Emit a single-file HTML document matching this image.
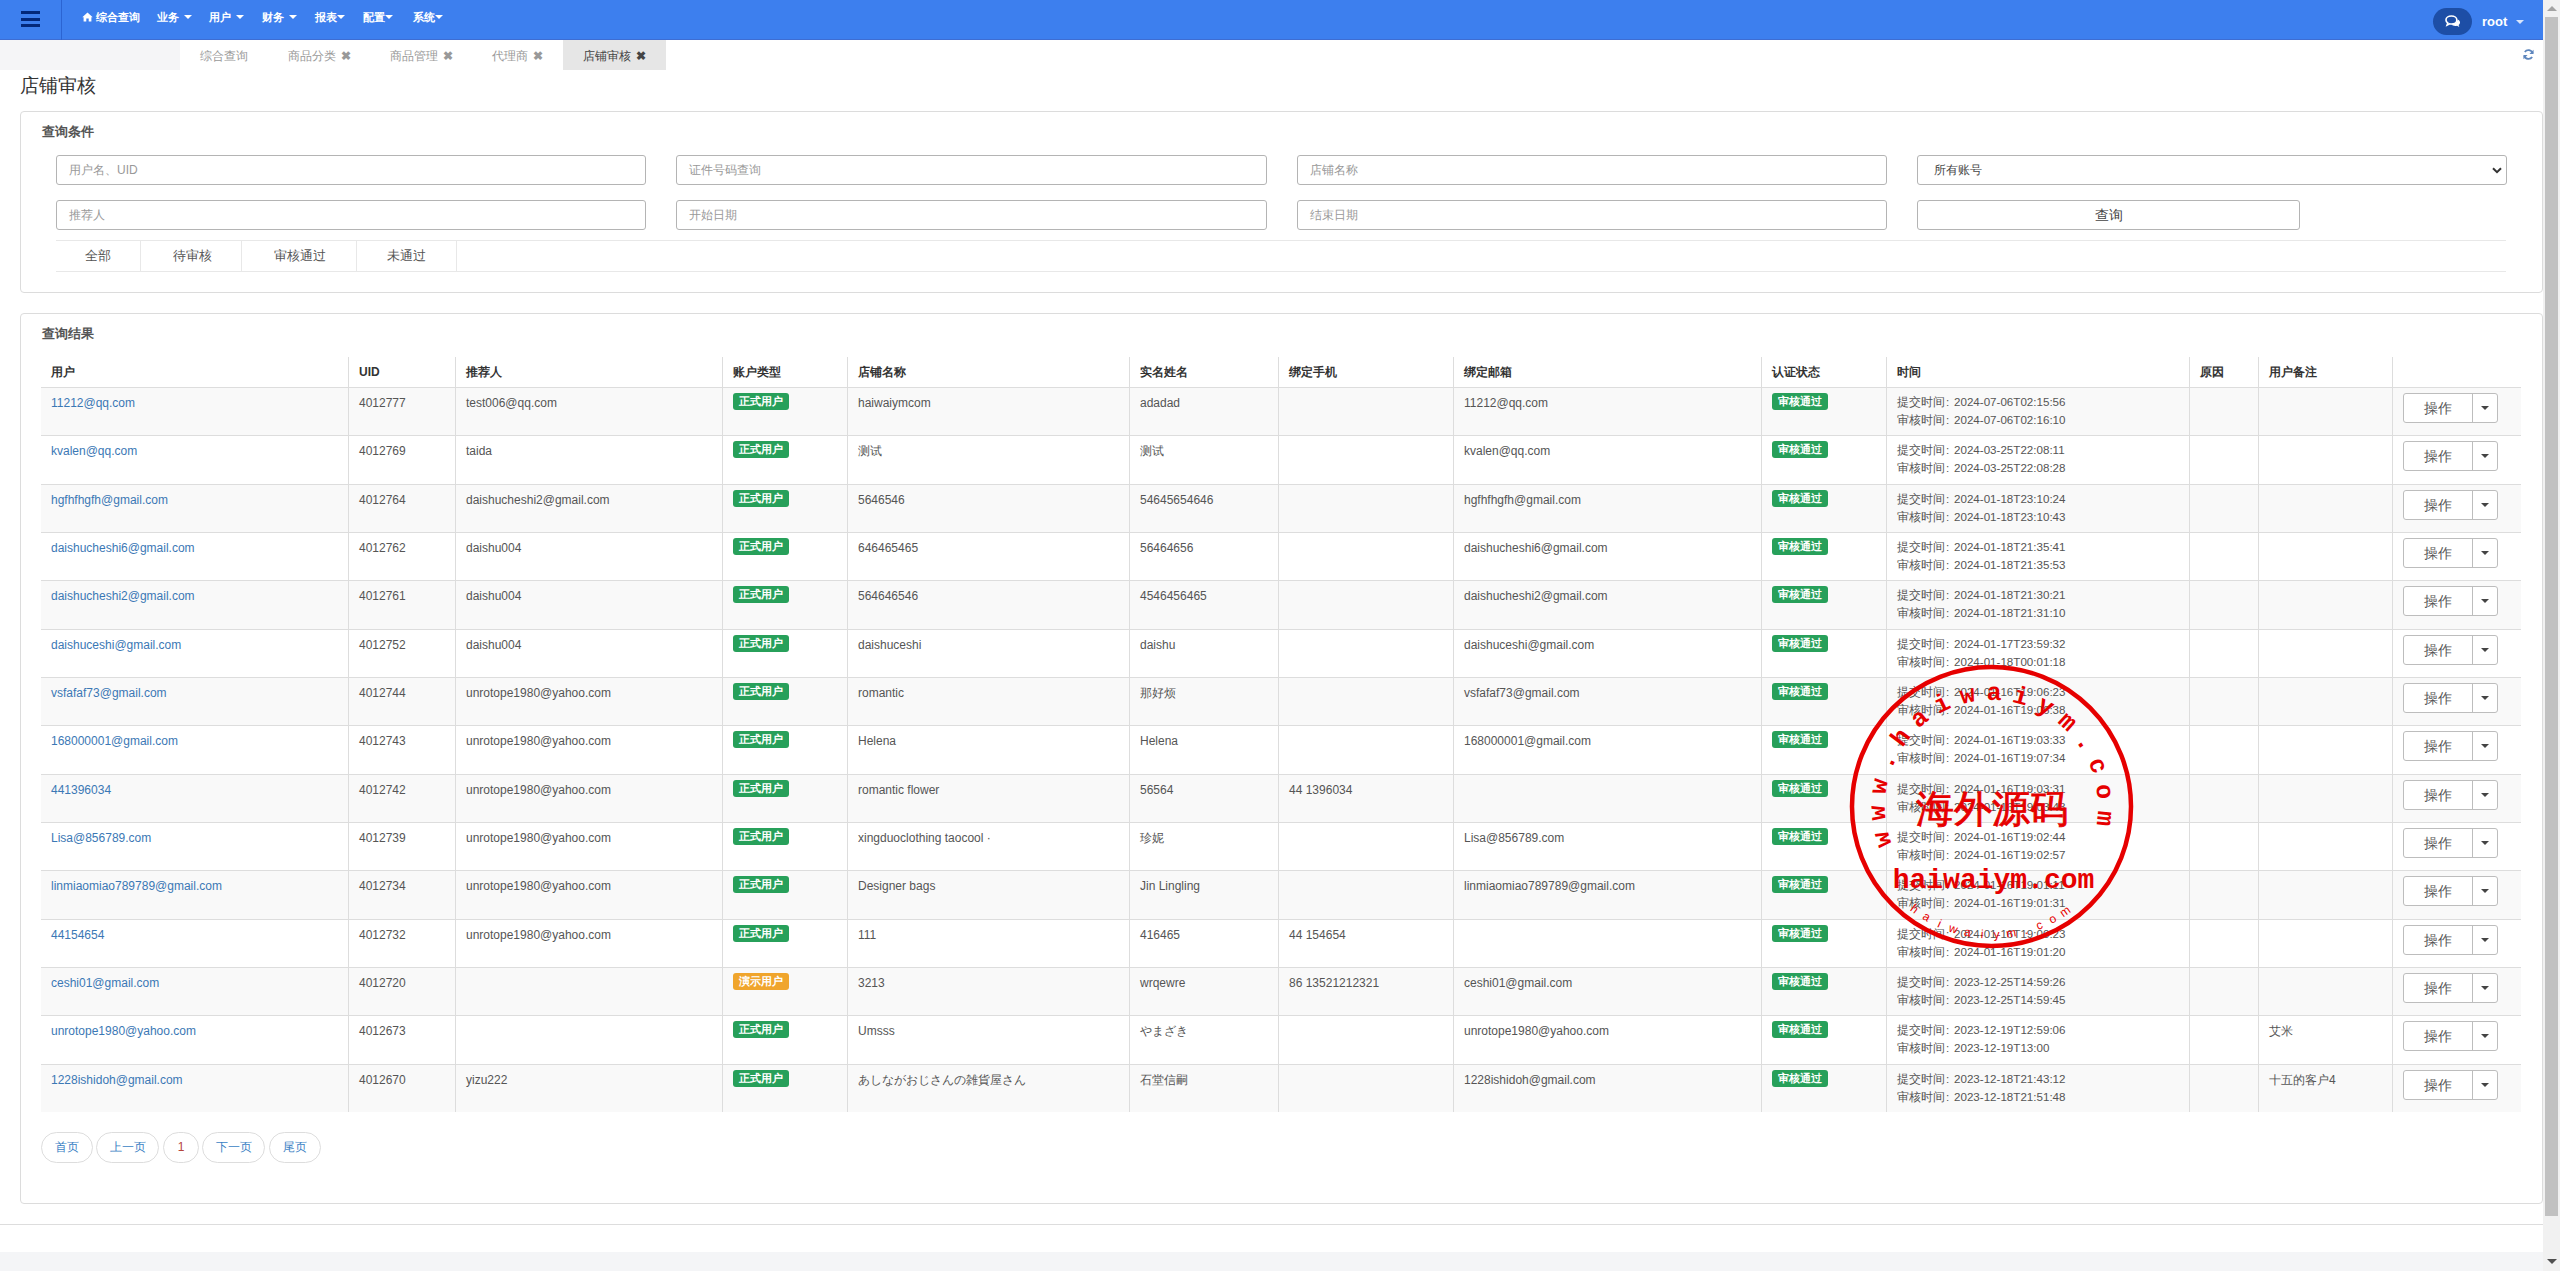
<!DOCTYPE html>
<html><head><meta charset="utf-8"><title>店铺审核</title>
<style>
*{margin:0;padding:0;box-sizing:border-box}
html,body{width:2560px;height:1271px;overflow:hidden;background:#fff}
body{position:relative;font-family:"Liberation Sans",sans-serif;font-size:12px;color:#555}
.abs{position:absolute}
#nav{position:absolute;left:0;top:0;width:2543px;height:40px;background:#3d7fee;border-bottom:1px solid #3e6dd2}
#nav .sep{position:absolute;left:61px;top:0;width:1px;height:40px;background:#2b64d2}
#nav .hb{position:absolute;left:21px;width:19px;height:3px;background:#03287a}
#nav .it{position:absolute;top:10px;color:#fff;font-weight:bold;font-size:11px;line-height:14px;white-space:nowrap}
.caret{display:inline-block;width:0;height:0;border-left:4px solid transparent;border-right:4px solid transparent;border-top:4px solid #fff;vertical-align:middle;margin-top:-2px}
#chat{position:absolute;left:2433px;top:8px;width:39px;height:27px;border-radius:14px;background:#1d4ea6}
#root{position:absolute;left:2482px;top:14px;color:#fff;font-weight:bold;font-size:13px;line-height:15px}
#tabs{position:absolute;left:0;top:40px;width:2543px;height:30px}
#tabs .gray{position:absolute;left:0;top:0;width:180px;height:30px;background:#f5f5f7}
#tabs .tab{position:absolute;top:0;height:30px;line-height:32px;color:#999;font-size:12px;white-space:nowrap}
#tabs .act{background:#e6e6e6;color:#444}
.x{display:inline-block;font-weight:bold;color:#999;margin-left:5px;font-size:12px}
.act .x{color:#444}
#title{position:absolute;left:20px;top:74px;font-size:19px;line-height:24px;color:#333}
.panel{position:absolute;left:20px;width:2523px;border:1px solid #dcdcdc;border-radius:4px;background:#fff}
.ph{position:absolute;left:42px;font-size:13px;font-weight:bold;color:#555;line-height:16px}
.inp{position:absolute;height:30px;border:1px solid #b4b4b4;border-radius:3px;background:#fff;color:#999;font-size:12px;line-height:28px;padding-left:12px;white-space:nowrap}
.sel{color:#444;padding-left:16px}
.btn{position:absolute;height:30px;border:1px solid #b4b4b4;border-radius:3px;background:#fff;color:#444;font-size:14px;line-height:28px;text-align:center}
.ft{position:absolute;top:241px;height:30px;line-height:30px;font-size:13px;color:#555;text-align:center}
#ftl1,#ftl2{position:absolute;left:56px;width:2450px;height:1px;background:#e8e8e8}
.fsep{position:absolute;top:241px;width:1px;height:30px;background:#e8e8e8}
#tbl{position:absolute;left:0;top:0}
.rbg{position:absolute;left:41px;width:2480px}
.hl{position:absolute;left:41px;width:2480px;height:1px;background:#ddd}
.vl{position:absolute;top:357px;width:1px;height:755px;background:#ddd}
.th{position:absolute;top:364px;font-weight:bold;color:#333;font-size:12px;line-height:16px;white-space:nowrap}
.td{position:absolute;font-size:12px;line-height:18px;color:#555;white-space:nowrap}
.lk{color:#3b78b5}
.tm{line-height:18px;font-size:11.6px}
.bd{position:absolute;height:17px;line-height:17px;padding:0 6px;border-radius:3px;background:#27a05a;color:#fff;font-weight:bold;font-size:11px;white-space:nowrap}
.bd.or{background:#f0a52c}
.op{position:absolute;width:95px;height:30px;border:1px solid #bdbdbd;border-radius:3px;background:#fff}
.opm{position:absolute;left:0;top:0;width:69px;height:28px;line-height:28px;text-align:center;font-size:14px;color:#555;border-right:1px solid #bdbdbd}
.opc{position:absolute;left:69px;top:0;width:24px;height:27px}
.opc i{position:absolute;left:8px;top:12px;border-left:4px solid transparent;border-right:4px solid transparent;border-top:4px solid #444}
.pg{position:absolute;top:1132px;height:31px;border:1px solid #ddd;border-radius:16px;color:#3a7fc4;font-size:12px;line-height:29px;text-align:center;background:#fff}
#foot{position:absolute;left:0;top:1224px;width:2543px;height:1px;background:#ddd}
#gray{position:absolute;left:0;top:1252px;width:2543px;height:19px;background:#f4f5f7}
#sb{position:absolute;left:2543px;top:0;width:17px;height:1271px;background:#f1f1f1}
#thumb{position:absolute;left:2545px;top:17px;width:13px;height:1199px;background:#c1c1c1}
.sba{position:absolute;left:2547px;width:0;height:0;border-left:5px solid transparent;border-right:5px solid transparent}

.cl{display:inline-block;width:9px;font-style:normal;padding-left:1px}

</style></head><body>
<div id="nav">
 <div class="hb" style="top:11px"></div><div class="hb" style="top:17.5px"></div><div class="hb" style="top:24px"></div>
 <div class="sep"></div>
 <div class="it" style="left:82px"><svg width="11" height="10" viewBox="0 0 11 10" style="vertical-align:-1px;margin-right:3px"><path d="M5.5 0.5 L0.3 5.2 L1.6 5.2 L1.6 9.5 L4.3 9.5 L4.3 6.6 L6.7 6.6 L6.7 9.5 L9.4 9.5 L9.4 5.2 L10.7 5.2 Z" fill="#fff"/></svg>综合查询</div>
 <div class="it" style="left:157px">业务 <span class="caret" style="margin-left:2px"></span></div>
 <div class="it" style="left:209px">用户 <span class="caret" style="margin-left:2px"></span></div>
 <div class="it" style="left:262px">财务 <span class="caret" style="margin-left:2px"></span></div>
 <div class="it" style="left:315px">报表<span class="caret"></span></div>
 <div class="it" style="left:363px">配置<span class="caret"></span></div>
 <div class="it" style="left:413px">系统<span class="caret"></span></div>
 <div id="chat"><svg width="16" height="13" viewBox="0 0 20 16" style="position:absolute;left:11.5px;top:7px"><path d="M8 1.2c-3.8 0-6.8 2.2-6.8 5 0 1.5.9 2.8 2.3 3.7L2.6 12.4l3.2-1.6c.7.2 1.5.3 2.2.3 3.8 0 6.8-2.2 6.8-5S11.8 1.2 8 1.2z" fill="none" stroke="#fff" stroke-width="2"/><path d="M15.8 5.5c1.8.8 3 2.2 3 3.8 0 1.2-.7 2.3-1.8 3.1l.9 2.4-2.9-1.5c-.6.2-1.3.2-2 .2-2.2 0-4.1-.8-5.2-2 3.9-.1 7.6-2.3 8-6z" fill="#fff"/></svg></div>
 <div id="root">root <span class="caret" style="margin-left:5px;opacity:.8"></span></div>
</div>
<div id="tabs">
 <div class="gray"></div>
 <div class="tab" style="left:200px">综合查询</div>
 <div class="tab" style="left:288px">商品分类<span class="x">✖</span></div>
 <div class="tab" style="left:390px">商品管理<span class="x">✖</span></div>
 <div class="tab" style="left:492px">代理商<span class="x">✖</span></div>
 <div class="tab act" style="left:563px;width:103px;padding-left:20px">店铺审核<span class="x">✖</span></div>
 <svg width="11" height="11" viewBox="0 0 12 12" style="position:absolute;left:2523px;top:9px"><path d="M10.5 4.5A4.8 4.8 0 0 0 2 3.2" fill="none" stroke="#5e86bd" stroke-width="2"/><path d="M1.5 7.5A4.8 4.8 0 0 0 10 8.8" fill="none" stroke="#5e86bd" stroke-width="2"/><path d="M11.5 0.8v4.6H7z" fill="#5e86bd"/><path d="M0.5 11.2V6.6H5z" fill="#5e86bd"/></svg>
</div>
<div id="title">店铺审核</div>

<div class="panel" style="top:111px;height:182px"></div>
<div class="ph" style="top:124px">查询条件</div>
<div class="inp" style="left:56px;top:155px;width:590px">用户名、UID</div>
<div class="inp" style="left:676px;top:155px;width:591px">证件号码查询</div>
<div class="inp" style="left:1297px;top:155px;width:590px">店铺名称</div>
<div class="inp sel" style="left:1917px;top:155px;width:590px">所有账号<svg width="10" height="7" viewBox="0 0 10 7" style="position:absolute;right:4px;top:11px"><path d="M1 1.2l4 4 4-4" fill="none" stroke="#333" stroke-width="2"/></svg></div>
<div class="inp" style="left:56px;top:200px;width:590px">推荐人</div>
<div class="inp" style="left:676px;top:200px;width:591px">开始日期</div>
<div class="inp" style="left:1297px;top:200px;width:590px">结束日期</div>
<div class="btn" style="left:1917px;top:200px;width:383px">查询</div>
<div id="ftl1" style="top:240px"></div>
<div id="ftl2" style="top:271px"></div>
<div class="ft" style="left:56px;width:84px">全部</div>
<div class="fsep" style="left:140px"></div>
<div class="ft" style="left:142px;width:100px">待审核</div>
<div class="fsep" style="left:241px"></div>
<div class="ft" style="left:243px;width:114px">审核通过</div>
<div class="fsep" style="left:356px"></div>
<div class="ft" style="left:357px;width:99px">未通过</div>
<div class="fsep" style="left:456px"></div>

<div class="panel" style="top:313px;height:891px"></div>
<div class="ph" style="top:326px">查询结果</div>

<div class="pg" style="left:41px;width:52px">首页</div>
<div class="pg" style="left:96px;width:63px">上一页</div>
<div class="pg" style="left:163px;width:36px;color:#b5453b">1</div>
<div class="pg" style="left:202px;width:63px">下一页</div>
<div class="pg" style="left:269px;width:52px">尾页</div>

<div id="foot"></div>
<div id="gray"></div>
<div id="sb"></div>
<div id="thumb"></div>
<div class="sba" style="top:6px;border-bottom:5px solid #a3a3a3"></div>
<div class="sba" style="top:1259px;border-top:5px solid #505050"></div>

<div id="tbl"><div class="rbg" style="top:387.00px;height:48.33px;background:#f9f9f9"></div><div class="rbg" style="top:435.33px;height:48.33px;background:#fff"></div><div class="rbg" style="top:483.66px;height:48.33px;background:#f9f9f9"></div><div class="rbg" style="top:531.99px;height:48.33px;background:#fff"></div><div class="rbg" style="top:580.32px;height:48.33px;background:#f9f9f9"></div><div class="rbg" style="top:628.65px;height:48.33px;background:#fff"></div><div class="rbg" style="top:676.98px;height:48.33px;background:#f9f9f9"></div><div class="rbg" style="top:725.31px;height:48.33px;background:#fff"></div><div class="rbg" style="top:773.64px;height:48.33px;background:#f9f9f9"></div><div class="rbg" style="top:821.97px;height:48.33px;background:#fff"></div><div class="rbg" style="top:870.30px;height:48.33px;background:#f9f9f9"></div><div class="rbg" style="top:918.63px;height:48.33px;background:#fff"></div><div class="rbg" style="top:966.96px;height:48.33px;background:#f9f9f9"></div><div class="rbg" style="top:1015.29px;height:48.33px;background:#fff"></div><div class="rbg" style="top:1063.62px;height:48.33px;background:#f9f9f9"></div><div class="hl" style="top:387px"></div><div class="hl" style="top:435px"></div><div class="hl" style="top:484px"></div><div class="hl" style="top:532px"></div><div class="hl" style="top:580px"></div><div class="hl" style="top:629px"></div><div class="hl" style="top:677px"></div><div class="hl" style="top:725px"></div><div class="hl" style="top:774px"></div><div class="hl" style="top:822px"></div><div class="hl" style="top:870px"></div><div class="hl" style="top:919px"></div><div class="hl" style="top:967px"></div><div class="hl" style="top:1015px"></div><div class="hl" style="top:1064px"></div><div class="vl" style="left:348px"></div><div class="vl" style="left:455px"></div><div class="vl" style="left:722px"></div><div class="vl" style="left:847px"></div><div class="vl" style="left:1129px"></div><div class="vl" style="left:1278px"></div><div class="vl" style="left:1453px"></div><div class="vl" style="left:1761px"></div><div class="vl" style="left:1886px"></div><div class="vl" style="left:2189px"></div><div class="vl" style="left:2258px"></div><div class="vl" style="left:2392px"></div><div class="th" style="left:51px">用户</div><div class="th" style="left:359px">UID</div><div class="th" style="left:466px">推荐人</div><div class="th" style="left:733px">账户类型</div><div class="th" style="left:858px">店铺名称</div><div class="th" style="left:1140px">实名姓名</div><div class="th" style="left:1289px">绑定手机</div><div class="th" style="left:1464px">绑定邮箱</div><div class="th" style="left:1772px">认证状态</div><div class="th" style="left:1897px">时间</div><div class="th" style="left:2200px">原因</div><div class="th" style="left:2269px">用户备注</div><div class="td lk" style="left:51px;top:394.00px">11212@qq.com</div><div class="td" style="left:359px;top:394.00px">4012777</div><div class="td" style="left:466px;top:394.00px">test006@qq.com</div><div class="bd" style="left:733px;top:393.00px">正式用户</div><div class="td" style="left:858px;top:394.00px">haiwaiymcom</div><div class="td" style="left:1140px;top:394.00px">adadad</div><div class="td" style="left:1464px;top:394.00px">11212@qq.com</div><div class="bd" style="left:1772px;top:393.00px">审核通过</div><div class="td tm" style="left:1897px;top:393.00px">提交时间<i class="cl">:</i>2024-07-06T02:15:56<br>审核时间<i class="cl">:</i>2024-07-06T02:16:10</div><div class="op" style="left:2403px;top:393.00px"><span class="opm">操作</span><span class="opc"><i></i></span></div><div class="td lk" style="left:51px;top:442.33px">kvalen@qq.com</div><div class="td" style="left:359px;top:442.33px">4012769</div><div class="td" style="left:466px;top:442.33px">taida</div><div class="bd" style="left:733px;top:441.33px">正式用户</div><div class="td" style="left:858px;top:442.33px">测试</div><div class="td" style="left:1140px;top:442.33px">测试</div><div class="td" style="left:1464px;top:442.33px">kvalen@qq.com</div><div class="bd" style="left:1772px;top:441.33px">审核通过</div><div class="td tm" style="left:1897px;top:441.33px">提交时间<i class="cl">:</i>2024-03-25T22:08:11<br>审核时间<i class="cl">:</i>2024-03-25T22:08:28</div><div class="op" style="left:2403px;top:441.33px"><span class="opm">操作</span><span class="opc"><i></i></span></div><div class="td lk" style="left:51px;top:490.66px">hgfhfhgfh@gmail.com</div><div class="td" style="left:359px;top:490.66px">4012764</div><div class="td" style="left:466px;top:490.66px">daishucheshi2@gmail.com</div><div class="bd" style="left:733px;top:489.66px">正式用户</div><div class="td" style="left:858px;top:490.66px">5646546</div><div class="td" style="left:1140px;top:490.66px">54645654646</div><div class="td" style="left:1464px;top:490.66px">hgfhfhgfh@gmail.com</div><div class="bd" style="left:1772px;top:489.66px">审核通过</div><div class="td tm" style="left:1897px;top:489.66px">提交时间<i class="cl">:</i>2024-01-18T23:10:24<br>审核时间<i class="cl">:</i>2024-01-18T23:10:43</div><div class="op" style="left:2403px;top:489.66px"><span class="opm">操作</span><span class="opc"><i></i></span></div><div class="td lk" style="left:51px;top:538.99px">daishucheshi6@gmail.com</div><div class="td" style="left:359px;top:538.99px">4012762</div><div class="td" style="left:466px;top:538.99px">daishu004</div><div class="bd" style="left:733px;top:537.99px">正式用户</div><div class="td" style="left:858px;top:538.99px">646465465</div><div class="td" style="left:1140px;top:538.99px">56464656</div><div class="td" style="left:1464px;top:538.99px">daishucheshi6@gmail.com</div><div class="bd" style="left:1772px;top:537.99px">审核通过</div><div class="td tm" style="left:1897px;top:537.99px">提交时间<i class="cl">:</i>2024-01-18T21:35:41<br>审核时间<i class="cl">:</i>2024-01-18T21:35:53</div><div class="op" style="left:2403px;top:537.99px"><span class="opm">操作</span><span class="opc"><i></i></span></div><div class="td lk" style="left:51px;top:587.32px">daishucheshi2@gmail.com</div><div class="td" style="left:359px;top:587.32px">4012761</div><div class="td" style="left:466px;top:587.32px">daishu004</div><div class="bd" style="left:733px;top:586.32px">正式用户</div><div class="td" style="left:858px;top:587.32px">564646546</div><div class="td" style="left:1140px;top:587.32px">4546456465</div><div class="td" style="left:1464px;top:587.32px">daishucheshi2@gmail.com</div><div class="bd" style="left:1772px;top:586.32px">审核通过</div><div class="td tm" style="left:1897px;top:586.32px">提交时间<i class="cl">:</i>2024-01-18T21:30:21<br>审核时间<i class="cl">:</i>2024-01-18T21:31:10</div><div class="op" style="left:2403px;top:586.32px"><span class="opm">操作</span><span class="opc"><i></i></span></div><div class="td lk" style="left:51px;top:635.65px">daishuceshi@gmail.com</div><div class="td" style="left:359px;top:635.65px">4012752</div><div class="td" style="left:466px;top:635.65px">daishu004</div><div class="bd" style="left:733px;top:634.65px">正式用户</div><div class="td" style="left:858px;top:635.65px">daishuceshi</div><div class="td" style="left:1140px;top:635.65px">daishu</div><div class="td" style="left:1464px;top:635.65px">daishuceshi@gmail.com</div><div class="bd" style="left:1772px;top:634.65px">审核通过</div><div class="td tm" style="left:1897px;top:634.65px">提交时间<i class="cl">:</i>2024-01-17T23:59:32<br>审核时间<i class="cl">:</i>2024-01-18T00:01:18</div><div class="op" style="left:2403px;top:634.65px"><span class="opm">操作</span><span class="opc"><i></i></span></div><div class="td lk" style="left:51px;top:683.98px">vsfafaf73@gmail.com</div><div class="td" style="left:359px;top:683.98px">4012744</div><div class="td" style="left:466px;top:683.98px">unrotope1980@yahoo.com</div><div class="bd" style="left:733px;top:682.98px">正式用户</div><div class="td" style="left:858px;top:683.98px">romantic</div><div class="td" style="left:1140px;top:683.98px">那好烦</div><div class="td" style="left:1464px;top:683.98px">vsfafaf73@gmail.com</div><div class="bd" style="left:1772px;top:682.98px">审核通过</div><div class="td tm" style="left:1897px;top:682.98px">提交时间<i class="cl">:</i>2024-01-16T19:06:23<br>审核时间<i class="cl">:</i>2024-01-16T19:06:38</div><div class="op" style="left:2403px;top:682.98px"><span class="opm">操作</span><span class="opc"><i></i></span></div><div class="td lk" style="left:51px;top:732.31px">168000001@gmail.com</div><div class="td" style="left:359px;top:732.31px">4012743</div><div class="td" style="left:466px;top:732.31px">unrotope1980@yahoo.com</div><div class="bd" style="left:733px;top:731.31px">正式用户</div><div class="td" style="left:858px;top:732.31px">Helena</div><div class="td" style="left:1140px;top:732.31px">Helena</div><div class="td" style="left:1464px;top:732.31px">168000001@gmail.com</div><div class="bd" style="left:1772px;top:731.31px">审核通过</div><div class="td tm" style="left:1897px;top:731.31px">提交时间<i class="cl">:</i>2024-01-16T19:03:33<br>审核时间<i class="cl">:</i>2024-01-16T19:07:34</div><div class="op" style="left:2403px;top:731.31px"><span class="opm">操作</span><span class="opc"><i></i></span></div><div class="td lk" style="left:51px;top:780.64px">441396034</div><div class="td" style="left:359px;top:780.64px">4012742</div><div class="td" style="left:466px;top:780.64px">unrotope1980@yahoo.com</div><div class="bd" style="left:733px;top:779.64px">正式用户</div><div class="td" style="left:858px;top:780.64px">romantic flower</div><div class="td" style="left:1140px;top:780.64px">56564</div><div class="td" style="left:1289px;top:780.64px">44 1396034</div><div class="bd" style="left:1772px;top:779.64px">审核通过</div><div class="td tm" style="left:1897px;top:779.64px">提交时间<i class="cl">:</i>2024-01-16T19:03:31<br>审核时间<i class="cl">:</i>2024-01-16T19:03:48</div><div class="op" style="left:2403px;top:779.64px"><span class="opm">操作</span><span class="opc"><i></i></span></div><div class="td lk" style="left:51px;top:828.97px">Lisa@856789.com</div><div class="td" style="left:359px;top:828.97px">4012739</div><div class="td" style="left:466px;top:828.97px">unrotope1980@yahoo.com</div><div class="bd" style="left:733px;top:827.97px">正式用户</div><div class="td" style="left:858px;top:828.97px">xingduoclothing taocool ·</div><div class="td" style="left:1140px;top:828.97px">珍妮</div><div class="td" style="left:1464px;top:828.97px">Lisa@856789.com</div><div class="bd" style="left:1772px;top:827.97px">审核通过</div><div class="td tm" style="left:1897px;top:827.97px">提交时间<i class="cl">:</i>2024-01-16T19:02:44<br>审核时间<i class="cl">:</i>2024-01-16T19:02:57</div><div class="op" style="left:2403px;top:827.97px"><span class="opm">操作</span><span class="opc"><i></i></span></div><div class="td lk" style="left:51px;top:877.30px">linmiaomiao789789@gmail.com</div><div class="td" style="left:359px;top:877.30px">4012734</div><div class="td" style="left:466px;top:877.30px">unrotope1980@yahoo.com</div><div class="bd" style="left:733px;top:876.30px">正式用户</div><div class="td" style="left:858px;top:877.30px">Designer bags</div><div class="td" style="left:1140px;top:877.30px">Jin Lingling</div><div class="td" style="left:1464px;top:877.30px">linmiaomiao789789@gmail.com</div><div class="bd" style="left:1772px;top:876.30px">审核通过</div><div class="td tm" style="left:1897px;top:876.30px">提交时间<i class="cl">:</i>2024-01-16T19:01:11<br>审核时间<i class="cl">:</i>2024-01-16T19:01:31</div><div class="op" style="left:2403px;top:876.30px"><span class="opm">操作</span><span class="opc"><i></i></span></div><div class="td lk" style="left:51px;top:925.63px">44154654</div><div class="td" style="left:359px;top:925.63px">4012732</div><div class="td" style="left:466px;top:925.63px">unrotope1980@yahoo.com</div><div class="bd" style="left:733px;top:924.63px">正式用户</div><div class="td" style="left:858px;top:925.63px">111</div><div class="td" style="left:1140px;top:925.63px">416465</div><div class="td" style="left:1289px;top:925.63px">44 154654</div><div class="bd" style="left:1772px;top:924.63px">审核通过</div><div class="td tm" style="left:1897px;top:924.63px">提交时间<i class="cl">:</i>2024-01-16T19:00:23<br>审核时间<i class="cl">:</i>2024-01-16T19:01:20</div><div class="op" style="left:2403px;top:924.63px"><span class="opm">操作</span><span class="opc"><i></i></span></div><div class="td lk" style="left:51px;top:973.96px">ceshi01@gmail.com</div><div class="td" style="left:359px;top:973.96px">4012720</div><div class="bd or" style="left:733px;top:972.96px">演示用户</div><div class="td" style="left:858px;top:973.96px">3213</div><div class="td" style="left:1140px;top:973.96px">wrqewre</div><div class="td" style="left:1289px;top:973.96px">86 13521212321</div><div class="td" style="left:1464px;top:973.96px">ceshi01@gmail.com</div><div class="bd" style="left:1772px;top:972.96px">审核通过</div><div class="td tm" style="left:1897px;top:972.96px">提交时间<i class="cl">:</i>2023-12-25T14:59:26<br>审核时间<i class="cl">:</i>2023-12-25T14:59:45</div><div class="op" style="left:2403px;top:972.96px"><span class="opm">操作</span><span class="opc"><i></i></span></div><div class="td lk" style="left:51px;top:1022.29px">unrotope1980@yahoo.com</div><div class="td" style="left:359px;top:1022.29px">4012673</div><div class="bd" style="left:733px;top:1021.29px">正式用户</div><div class="td" style="left:858px;top:1022.29px">Umsss</div><div class="td" style="left:1140px;top:1022.29px">やまざき</div><div class="td" style="left:1464px;top:1022.29px">unrotope1980@yahoo.com</div><div class="bd" style="left:1772px;top:1021.29px">审核通过</div><div class="td tm" style="left:1897px;top:1021.29px">提交时间<i class="cl">:</i>2023-12-19T12:59:06<br>审核时间<i class="cl">:</i>2023-12-19T13:00</div><div class="td" style="left:2269px;top:1022.29px">艾米</div><div class="op" style="left:2403px;top:1021.29px"><span class="opm">操作</span><span class="opc"><i></i></span></div><div class="td lk" style="left:51px;top:1070.62px">1228ishidoh@gmail.com</div><div class="td" style="left:359px;top:1070.62px">4012670</div><div class="td" style="left:466px;top:1070.62px">yizu222</div><div class="bd" style="left:733px;top:1069.62px">正式用户</div><div class="td" style="left:858px;top:1070.62px">あしながおじさんの雑貨屋さん</div><div class="td" style="left:1140px;top:1070.62px">石堂信嗣</div><div class="td" style="left:1464px;top:1070.62px">1228ishidoh@gmail.com</div><div class="bd" style="left:1772px;top:1069.62px">审核通过</div><div class="td tm" style="left:1897px;top:1069.62px">提交时间<i class="cl">:</i>2023-12-18T21:43:12<br>审核时间<i class="cl">:</i>2023-12-18T21:51:48</div><div class="td" style="left:2269px;top:1070.62px">十五的客户4</div><div class="op" style="left:2403px;top:1069.62px"><span class="opm">操作</span><span class="opc"><i></i></span></div></div>
<svg width="302" height="302" viewBox="0 0 302 302" style="position:absolute;left:1841px;top:656px;overflow:visible">
<circle cx="150.5" cy="150.5" r="139.5" fill="none" stroke="#e60000" stroke-width="4.5"/>
<text x="48.55" y="181.28" transform="rotate(-106.80 48.55 181.28)" font-family="Liberation Mono" font-weight="bold" font-size="25" fill="#e60000" text-anchor="middle">w</text>
<text x="44.17" y="156.59" transform="rotate(-93.28 44.17 156.59)" font-family="Liberation Mono" font-weight="bold" font-size="25" fill="#e60000" text-anchor="middle">w</text>
<text x="45.70" y="131.57" transform="rotate(-79.76 45.70 131.57)" font-family="Liberation Mono" font-weight="bold" font-size="25" fill="#e60000" text-anchor="middle">w</text>
<text x="53.03" y="107.59" transform="rotate(-66.24 53.03 107.59)" font-family="Liberation Mono" font-weight="bold" font-size="25" fill="#e60000" text-anchor="middle">.</text>
<text x="65.76" y="85.99" transform="rotate(-52.72 65.76 85.99)" font-family="Liberation Mono" font-weight="bold" font-size="25" fill="#e60000" text-anchor="middle">h</text>
<text x="83.19" y="67.97" transform="rotate(-39.20 83.19 67.97)" font-family="Liberation Mono" font-weight="bold" font-size="25" fill="#e60000" text-anchor="middle">a</text>
<text x="104.35" y="54.52" transform="rotate(-25.68 104.35 54.52)" font-family="Liberation Mono" font-weight="bold" font-size="25" fill="#e60000" text-anchor="middle">i</text>
<text x="128.07" y="46.39" transform="rotate(-12.16 128.07 46.39)" font-family="Liberation Mono" font-weight="bold" font-size="25" fill="#e60000" text-anchor="middle">w</text>
<text x="153.03" y="44.03" transform="rotate(1.36 153.03 44.03)" font-family="Liberation Mono" font-weight="bold" font-size="25" fill="#e60000" text-anchor="middle">a</text>
<text x="177.85" y="47.57" transform="rotate(14.88 177.85 47.57)" font-family="Liberation Mono" font-weight="bold" font-size="25" fill="#e60000" text-anchor="middle">i</text>
<text x="201.15" y="56.82" transform="rotate(28.40 201.15 56.82)" font-family="Liberation Mono" font-weight="bold" font-size="25" fill="#e60000" text-anchor="middle">y</text>
<text x="221.65" y="71.26" transform="rotate(41.92 221.65 71.26)" font-family="Liberation Mono" font-weight="bold" font-size="25" fill="#e60000" text-anchor="middle">m</text>
<text x="238.21" y="90.09" transform="rotate(55.44 238.21 90.09)" font-family="Liberation Mono" font-weight="bold" font-size="25" fill="#e60000" text-anchor="middle">.</text>
<text x="249.90" y="112.26" transform="rotate(68.96 249.90 112.26)" font-family="Liberation Mono" font-weight="bold" font-size="25" fill="#e60000" text-anchor="middle">c</text>
<text x="256.08" y="136.56" transform="rotate(82.48 256.08 136.56)" font-family="Liberation Mono" font-weight="bold" font-size="25" fill="#e60000" text-anchor="middle">o</text>
<text x="256.42" y="161.63" transform="rotate(96.00 256.42 161.63)" font-family="Liberation Mono" font-weight="bold" font-size="25" fill="#e60000" text-anchor="middle">m</text>
<text x="71.06" y="255.92" transform="rotate(37.00 71.06 255.92)" font-family="Liberation Sans" font-size="12" fill="#e60000" text-anchor="middle">h</text>
<text x="83.60" y="264.29" transform="rotate(30.45 83.60 264.29)" font-family="Liberation Sans" font-size="12" fill="#e60000" text-anchor="middle">a</text>
<text x="97.02" y="271.18" transform="rotate(23.90 97.02 271.18)" font-family="Liberation Sans" font-size="12" fill="#e60000" text-anchor="middle">i</text>
<text x="111.14" y="276.49" transform="rotate(17.35 111.14 276.49)" font-family="Liberation Sans" font-size="12" fill="#e60000" text-anchor="middle">w</text>
<text x="125.77" y="280.16" transform="rotate(10.80 125.77 280.16)" font-family="Liberation Sans" font-size="12" fill="#e60000" text-anchor="middle">a</text>
<text x="140.72" y="282.14" transform="rotate(4.25 140.72 282.14)" font-family="Liberation Sans" font-size="12" fill="#e60000" text-anchor="middle">i</text>
<text x="155.80" y="282.39" transform="rotate(-2.30 155.80 282.39)" font-family="Liberation Sans" font-size="12" fill="#e60000" text-anchor="middle">y</text>
<text x="170.81" y="280.93" transform="rotate(-8.85 170.81 280.93)" font-family="Liberation Sans" font-size="12" fill="#e60000" text-anchor="middle">m</text>
<text x="185.55" y="277.76" transform="rotate(-15.40 185.55 277.76)" font-family="Liberation Sans" font-size="12" fill="#e60000" text-anchor="middle">.</text>
<text x="199.84" y="272.93" transform="rotate(-21.95 199.84 272.93)" font-family="Liberation Sans" font-size="12" fill="#e60000" text-anchor="middle">c</text>
<text x="213.48" y="266.50" transform="rotate(-28.50 213.48 266.50)" font-family="Liberation Sans" font-size="12" fill="#e60000" text-anchor="middle">o</text>
<text x="226.31" y="258.56" transform="rotate(-35.05 226.31 258.56)" font-family="Liberation Sans" font-size="12" fill="#e60000" text-anchor="middle">m</text>
<text x="150.5" y="165.5" font-family="Liberation Serif" font-size="38" font-weight="500" fill="#e60000" stroke="#e60000" stroke-width="0.9" text-anchor="middle">海外源码</text>
<text x="152.5" y="231.5" font-family="Liberation Mono" font-size="28" font-weight="bold" fill="#e60000" text-anchor="middle">haiwaiym.com</text>
</svg>
</body></html>
